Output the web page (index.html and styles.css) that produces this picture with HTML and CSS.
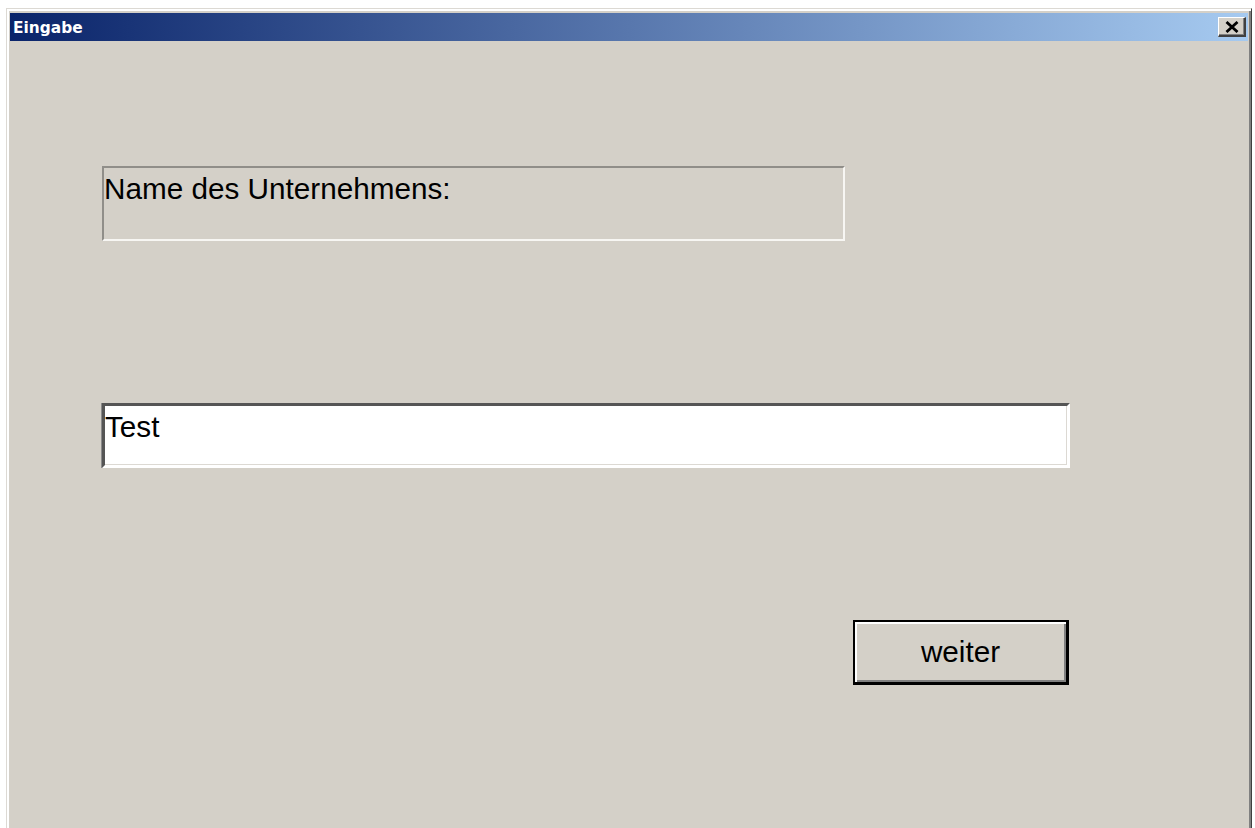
FILE: index.html
```html
<!DOCTYPE html>
<html lang="de">
<head>
<meta charset="utf-8">
<title>Eingabe</title>
<link rel="stylesheet" href="styles.css">
</head>
<body>
  <div class="window">
    <div class="titlebar">
      <span class="title">Eingabe</span>
      <button class="close" type="button" aria-label="Schließen">
        <svg width="14" height="12" viewBox="0 0 14 12" aria-hidden="true">
          <path d="M1.5 1 L12.5 11 M12.5 1 L1.5 11" stroke="#000" stroke-width="2.8" fill="none"/>
        </svg>
      </button>
    </div>
    <div class="content">
      <div class="form">
        <div class="label">Name des Unternehmens:</div>
        <div class="textfield">Test</div>
        <button class="btn-default" type="button">weiter</button>
      </div>
    </div>
  </div>
</body>
</html>
```
FILE: styles.css
```css
html, body {
  margin: 0;
  padding: 0;
  background: #ffffff;
  overflow: hidden;
}

body {
  width: 1255px;
  height: 828px;
}

/* Classic raised dialog frame */
.window {
  box-sizing: border-box;
  margin: 8px 0 0 6px;
  width: 1246px;
  height: 840px;
  background: #d4d0c8;
  border: 1px solid;
  border-color: #dcd9d3 #404040 #404040 #dcd9d3;
  box-shadow: inset 2px 2px #ffffff, inset -2px -2px #808080;
  padding: 4px 3px 0 3px;
  display: flex;
  flex-direction: column;
}

.titlebar {
  height: 28px;
  flex: none;
  display: flex;
  align-items: center;
  justify-content: space-between;
  padding: 0 2px 0 3px;
  background: linear-gradient(to right, #0a246a, #a6caf0);
}

.title {
  color: #ffffff;
  font-family: "DejaVu Sans", "Liberation Sans", sans-serif;
  font-weight: bold;
  font-size: 15.4px;
  line-height: 1;
  padding-top: 4px;
}

.close {
  box-sizing: border-box;
  width: 28px;
  height: 20px;
  padding: 0;
  display: flex;
  align-items: center;
  justify-content: center;
  background: #d4d0c8;
  border: solid;
  border-width: 1px 2px 2px 1px;
  border-color: #ffffff #404040 #404040 #ffffff;
  box-shadow: inset -1px -1px #808080;
}

.content {
  flex: 1;
  padding: 125px 0 0 92px;
}

.form {
  width: 968px;
  display: flex;
  flex-direction: column;
  align-items: flex-start;
  font-family: "Liberation Sans", Arial, sans-serif;
  font-size: 29.7px;
  color: #000000;
}

/* Sunken static frame around the caption */
.label {
  box-sizing: border-box;
  width: 743px;
  height: 75px;
  border: 2px solid;
  border-color: #908e89 #f7f6f3 #f7f6f3 #908e89;
  padding: 4px 0 0 0;
  line-height: 1.149;
  white-space: nowrap;
}

/* Sunken edit field */
.textfield {
  box-sizing: border-box;
  width: 968px;
  height: 65px;
  margin-top: 162px;
  background: #ffffff;
  border: 3px solid;
  border-color: #555555 #ffffff #ffffff #555555;
  box-shadow: inset -1px -1px #dcd9d3, -1px 0 #8a8a8a;
  padding: 4px 0 0 0;
  line-height: 1.149;
}

/* Default push button: black frame around a raised bevel */
.btn-default {
  box-sizing: border-box;
  align-self: flex-end;
  margin: 152px 1px 0 0;
  width: 216px;
  height: 65px;
  padding: 0;
  background: #d4d0c8;
  border: solid #000000;
  border-width: 2px 3px 3px 2px;
  box-shadow: inset 2px 2px #ffffff, inset -2px -2px #808080;
  font-family: "Liberation Sans", Arial, sans-serif;
  font-size: 29.7px;
  color: #000000;
  line-height: 1;
}
```
